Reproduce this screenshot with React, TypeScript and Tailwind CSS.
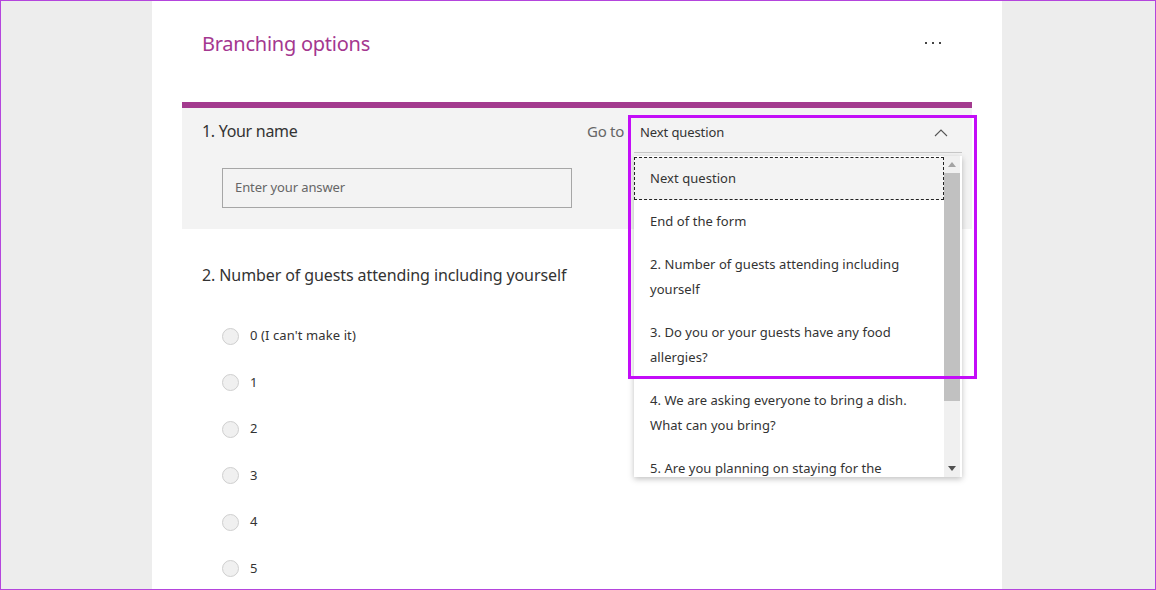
import React from "react";

const options = ["0 (I can't make it)", "1", "2", "3", "4", "5"];

const items: string[][] = [
  ["Next question"],
  ["End of the form"],
  ["2. Number of guests attending including", "yourself"],
  ["3. Do you or your guests have any food", "allergies?"],
  ["4. We are asking everyone to bring a dish.", "What can you bring?"],
  ["5. Are you planning on staying for the"],
];

export default function App() {
  return (
    <div
      className="w-[1156px] h-[590px] overflow-hidden border border-[#b445dd] bg-[#ededed] pl-[151px]"
      style={{ fontFamily: '"Noto Sans", "Open Sans", sans-serif' }}
    >
      <div className="w-[850px] h-full bg-white px-[30px]">
        {/* header */}
        <div className="h-[101px] flex items-start justify-between pl-[20px] pr-[30px] pt-[29px]">
          <div className="text-[20px] leading-[28px] text-[#a4378f] tracking-[-0.25px]">Branching options</div>
          <div className="flex gap-[5px] pt-[12px] pr-[1px]">
            <span className="w-[2px] h-[2px] bg-[#444]" />
            <span className="w-[2px] h-[2px] bg-[#444]" />
            <span className="w-[2px] h-[2px] bg-[#444]" />
          </div>
        </div>
        <div className="h-[6px] bg-[#a33a8e]" />
        {/* question 1 */}
        <div className="bg-[#f3f3f3] h-[121px] pl-[20px] pr-[10px]">
          <div className="flex justify-between items-start">
            <div className="pt-[11px] text-[16px] leading-[24px] text-[#333] tracking-[-0.3px]">1. Your name</div>
            <div className="flex items-start">
              <div className="pt-[12px] mr-[10px] text-[15px] leading-[22px] text-[#666] tracking-[-0.3px]">Go to</div>
              <div className="relative w-[328px] h-[39px] border-b border-[#c8c8c8] mt-[6px]">
                <div className="flex items-center justify-between h-[38px] pl-[6px] pr-[12px]">
                  <span className="text-[13px] text-[#333] tracking-[-0.1px]">Next question</span>
                  <svg width="14" height="8" viewBox="0 0 14 8" className="mr-[2px]">
                    <path d="M1 7 L7 1 L13 7" fill="none" stroke="#555" strokeWidth="1.1" />
                  </svg>
                </div>
                {/* dropdown list */}
                <div className="absolute left-0 top-[42px] w-[328px] h-[321px] bg-white shadow-[0_2px_6px_rgba(0,0,0,0.25)] flex overflow-hidden z-10">
                  <div className="flex-1 overflow-hidden pt-[1px]">
                    {items.map((lines, i) => (
                      <div
                        key={i}
                        className={
                          i === 0
                            ? "py-[8px] pl-[15px] border border-dashed border-[#222] bg-[#f3f3f3] text-[13px] leading-[25px] text-[#333] tracking-[0.05px]"
                            : "py-[9px] pl-[16px] text-[13px] leading-[25px] text-[#333] tracking-[0.05px]"
                        }
                      >
                        {lines.map((l, j) => (
                          <div key={j}>{l}</div>
                        ))}
                      </div>
                    ))}
                  </div>
                  <div className="w-[16px] mr-[2px] bg-[#f0f0f0] flex flex-col items-center">
                    <div className="h-[17px] flex items-center justify-center">
                      <svg width="8" height="5" viewBox="0 0 8 5"><path d="M0 5 L4 0 L8 5 Z" fill="#a3a3a3" /></svg>
                    </div>
                    <div className="w-full h-[228px] bg-[#c1c1c1]" />
                    <div className="flex-1" />
                    <div className="h-[17px] flex items-center justify-center">
                      <svg width="8" height="5" viewBox="0 0 8 5"><path d="M0 0 L8 0 L4 5 Z" fill="#505050" /></svg>
                    </div>
                  </div>
                </div>
                {/* highlight box */}
                <div className="absolute left-[-6px] top-[1px] w-[349px] h-[264px] border-[3px] border-[#c30df8] z-20 pointer-events-none" />
              </div>
            </div>
          </div>
          <div className="mt-[15px] ml-[20px] w-[350px] h-[40px] border border-[#a6a6a6] flex items-center pl-[12px] text-[13px] text-[#666] tracking-[-0.1px]">
            Enter your answer
          </div>
        </div>
        {/* question 2 */}
        <div className="pl-[20px] pt-[34px]">
          <div className="text-[16px] leading-[24px] text-[#333] tracking-[-0.1px]">2. Number of guests attending including yourself</div>
          <div className="mt-[41px] pl-[20px] flex flex-col gap-[30.5px]">
            {options.map((o) => (
              <div key={o} className="flex items-center h-[16px]">
                <span className="w-[17px] h-[17px] rounded-full bg-[#f0f0f0] border border-[#cfcfcf]" />
                <span className="ml-[11px] text-[13px] text-[#333] tracking-[0.1px]">{o}</span>
              </div>
            ))}
          </div>
        </div>
      </div>
    </div>
  );
}
